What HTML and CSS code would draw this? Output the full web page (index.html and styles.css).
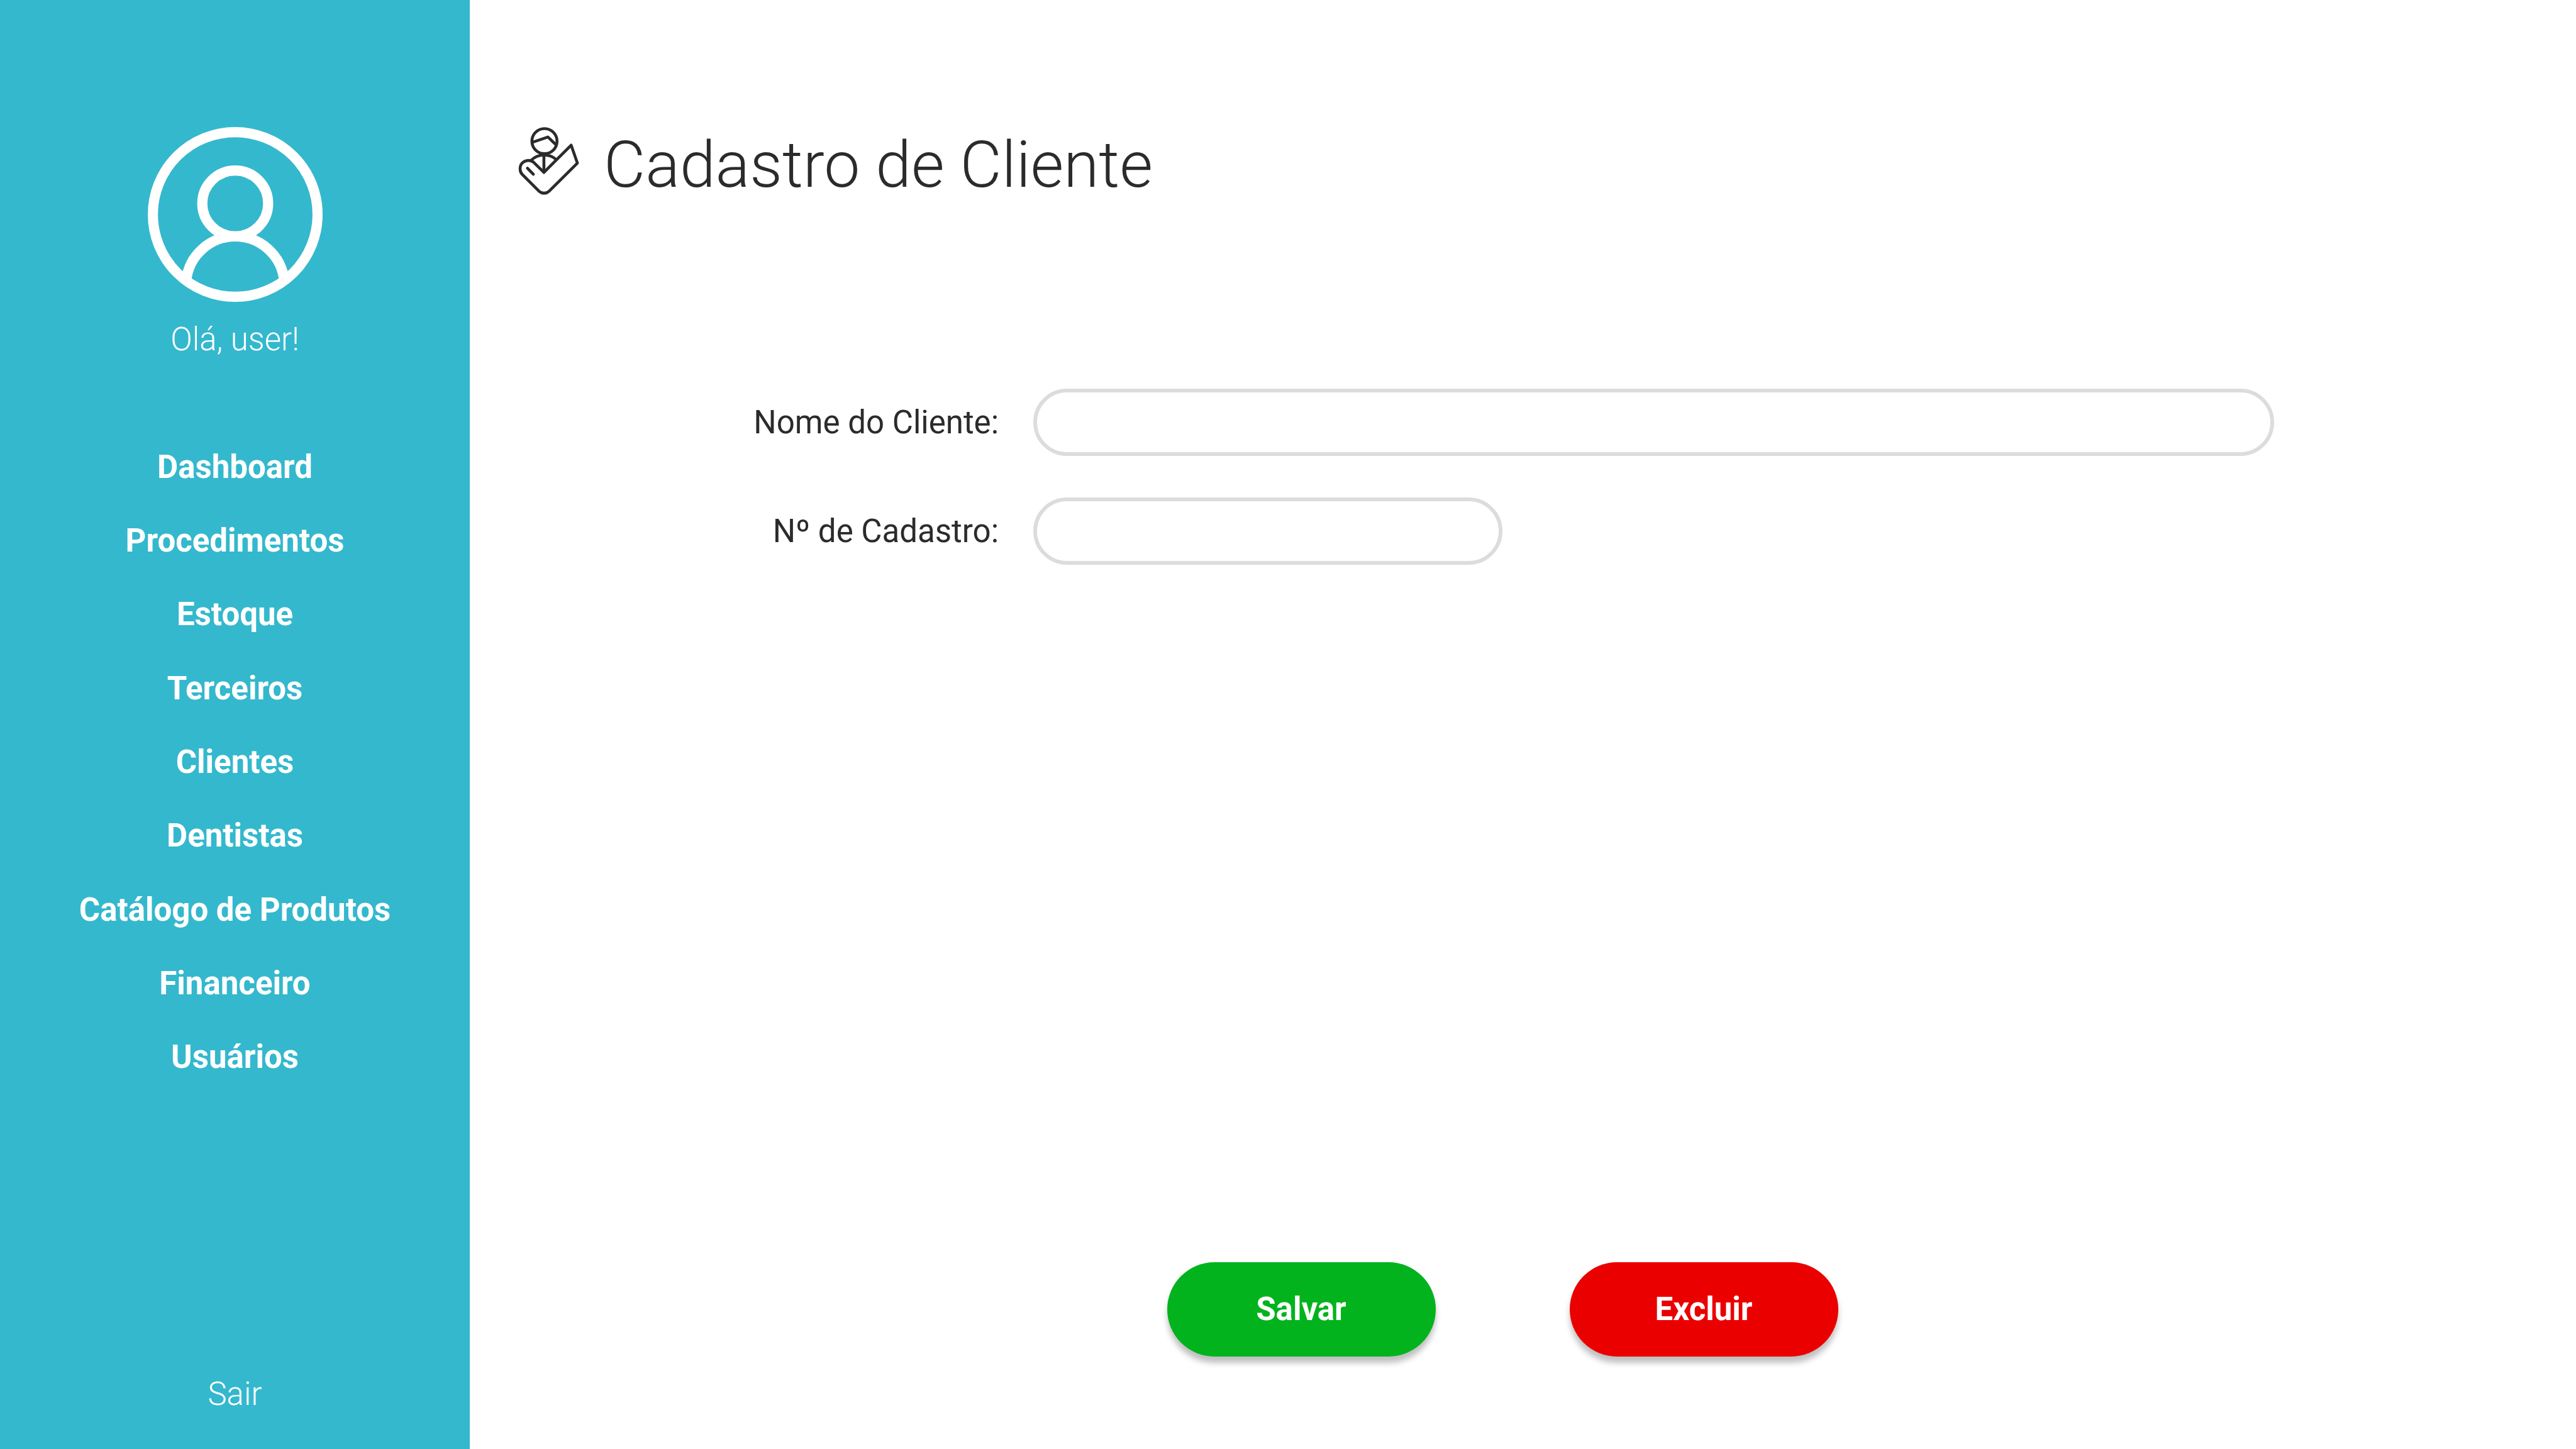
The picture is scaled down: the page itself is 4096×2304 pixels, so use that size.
FILE: index.html
```html
<!DOCTYPE html>
<html lang="pt-BR">
<head>
  <meta charset="utf-8">
  <meta name="viewport" content="width=device-width, initial-scale=1">
  <title>Cadastro de Cliente</title>
  <link rel="stylesheet" href="styles.css">
</head>
<body>
  <div class="app">
    <aside class="sidebar">
      <svg class="avatar" viewBox="0 0 1086 1086" aria-hidden="true">
        <circle cx="543" cy="543" r="511.5"/>
        <circle cx="543" cy="474.5" r="204.5"/>
        <path d="M238.5 955A306 306 0 0 1 847.5 955"/>
      </svg>
      <p class="greeting">Olá, user!</p>
      <nav class="nav" aria-label="Menu principal">
        <a class="nav-link" href="#">Dashboard</a>
        <a class="nav-link" href="#">Procedimentos</a>
        <a class="nav-link" href="#">Estoque</a>
        <a class="nav-link" href="#">Terceiros</a>
        <a class="nav-link" href="#">Clientes</a>
        <a class="nav-link" href="#">Dentistas</a>
        <a class="nav-link" href="#">Catálogo de Produtos</a>
        <a class="nav-link" href="#">Financeiro</a>
        <a class="nav-link" href="#">Usuários</a>
      </nav>
      <a class="logout" href="#">Sair</a>
    </aside>
    <main class="main">
      <header class="page-header">
        <svg class="page-icon" viewBox="68 67 380 424" aria-hidden="true">
          <circle cx="231.5" cy="155" r="78.5"/>
          <path d="M155 163L253 129L302 176"/>
          <path d="M148 275Q182 242 229 242Q272 242 304 269"/>
          <path d="M228 240V350"/>
          <path d="M228 350L398 180L437 292L262 466Q229 494 196 466L92 362C76 346 74 310 93 291C112 272 145 270 165 288Z"/>
          <path d="M125 324L162 362"/>
        </svg>
        <h1 class="title">Cadastro de Cliente</h1>
      </header>
      <form class="form">
        <div class="fields">
          <label class="label" for="nome">Nome do Cliente:</label>
          <input class="input" id="nome" type="text">
          <label class="label" for="numero">Nº de Cadastro:</label>
          <input class="input input-short" id="numero" type="text">
        </div>
        <div class="actions">
          <button class="button button-save" type="button">Salvar</button>
          <button class="button button-delete" type="button">Excluir</button>
        </div>
      </form>
    </main>
  </div>
</body>
</html>
```
FILE: styles.css
```css
* {
  box-sizing: border-box;
}

body {
  margin: 0;
  background: #fff;
  color: #2b2b2b;
  font-family: Roboto, "Liberation Sans", sans-serif;
  font-size: 51px;
  line-height: 60px;
}

.app {
  display: grid;
  grid-template-columns: 747px 1fr;
  min-height: 100vh;
}

.sidebar {
  display: flex;
  flex-direction: column;
  align-items: center;
  padding: 202px 0 57px;
  background: #34b8cd;
  color: #fff;
}

.avatar {
  width: 278px;
  height: 278px;
  fill: none;
  stroke: #fff;
  stroke-width: 63;
}

.greeting {
  margin: 30px 0 114px;
  font-weight: 300;
}

.nav {
  display: flex;
  flex-direction: column;
  align-self: stretch;
  min-height: 1056px;
}

.nav-link {
  display: flex;
  flex: 1;
  align-items: center;
  justify-content: center;
  color: inherit;
  font-weight: 700;
  text-decoration: none;
}

.logout {
  margin-top: auto;
  color: inherit;
  font-weight: 300;
  text-decoration: none;
}

.main {
  display: flex;
  flex-direction: column;
  padding: 202px 142px 147px 77px;
}

.page-header {
  display: flex;
  align-items: flex-start;
  gap: 39px;
}

.page-icon {
  width: 97px;
  height: 108px;
  fill: none;
  stroke: #2b2b2b;
  stroke-width: 18;
  stroke-linecap: round;
  stroke-linejoin: round;
}

.title {
  margin: 0;
  font-size: 102px;
  font-weight: 300;
  line-height: 120px;
}

.form {
  display: flex;
  flex: 1;
  flex-direction: column;
  justify-content: space-between;
  gap: 120px;
  padding-top: 296px;
}

.fields {
  display: grid;
  grid-template-columns: 764px 1fr;
  align-items: center;
  gap: 66px 55px;
  padding-right: 338px;
}

.label {
  text-align: right;
}

.input {
  width: 100%;
  height: 107px;
  padding: 0 48px;
  border: 6px solid #dcdcda;
  border-radius: 54px;
  background: #fff;
  color: inherit;
  font: inherit;
}

.input-short {
  max-width: 746px;
}

.actions {
  display: flex;
  justify-content: center;
  gap: 213px;
}

.button {
  width: 427px;
  height: 150px;
  padding: 0;
  border: 0;
  border-radius: 75px;
  box-shadow: 0 10px 10px rgba(0, 0, 0, 0.25);
  color: #fff;
  font: inherit;
  font-weight: 700;
}

.button-save {
  background: #02b31d;
}

.button-delete {
  background: #eb0000;
}
```
